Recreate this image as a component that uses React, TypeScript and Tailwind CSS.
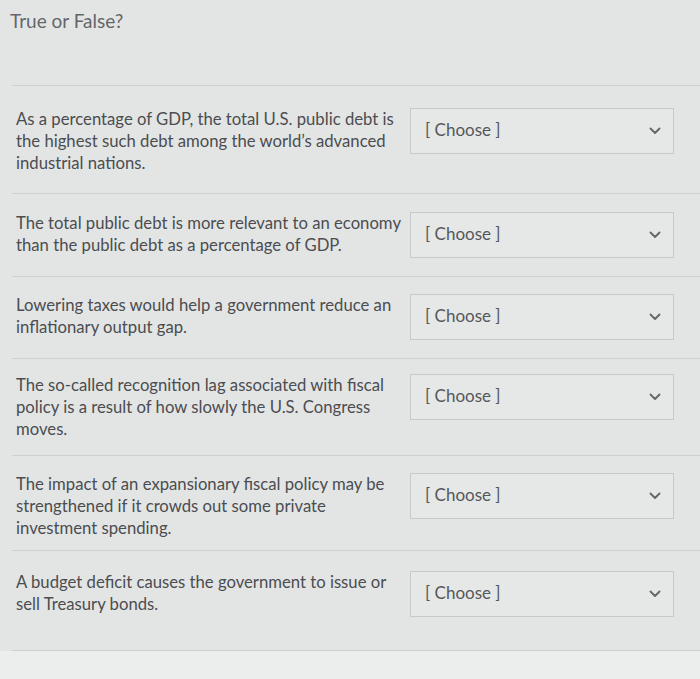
const questions = [
  {
    lines: [
      "As a percentage of GDP, the total U.S. public debt is",
      "the highest such debt among the world’s advanced",
      "industrial nations.",
    ],
    row: "pt-[22px] pb-[19px]",
  },
  {
    lines: [
      "The total public debt is more relevant to an economy",
      "than the public debt as a percentage of GDP.",
    ],
    row: "pt-[18px] pb-[18px]",
  },
  {
    lines: [
      "Lowering taxes would help a government reduce an",
      "inflationary output gap.",
    ],
    row: "pt-[17px] pb-[18px]",
  },
  {
    lines: [
      "The so-called recognition lag associated with fiscal",
      "policy is a result of how slowly the U.S. Congress",
      "moves.",
    ],
    row: "pt-[15px] pb-[15px]",
  },
  {
    lines: [
      "The impact of an expansionary fiscal policy may be",
      "strengthened if it crowds out some private",
      "investment spending.",
    ],
    row: "pt-[17px] pb-[11px]",
  },
  {
    lines: [
      "A budget deficit causes the government to issue or",
      "sell Treasury bonds.",
    ],
    row: "pt-[20px] pb-[33px]",
  },
];

function Chevron() {
  return (
    <svg width="12" height="8" viewBox="0 0 12 8" fill="none">
      <path
        d="M1.5 1.5 L6 6 L10.5 1.5"
        stroke="#65676a"
        strokeWidth="1.9"
        strokeLinecap="round"
        strokeLinejoin="round"
      />
    </svg>
  );
}

export default function App() {
  return (
    <div
      className="w-[700px] h-[679px] bg-[#e3e5e5] text-[#4b4d50] overflow-hidden"
      style={{ fontFamily: "Lato, 'Open Sans', sans-serif" }}
    >
      {/* Header */}
      <div className="h-[85px] pl-[10px] pt-[7px]">
        <h2 className="text-[19px] leading-[28px] text-[#646669]">True or False?</h2>
      </div>

      {/* Questions */}
      <div className="ml-[12px] border-t border-[#cdd0d1]">
        {questions.map((q, i) => (
          <div
            key={i}
            className={`flex items-start border-b border-[#cdd0d1] ${q.row}`}
          >
            <p className="w-[398px] pl-[4px] text-[16.7px] leading-[22px] shrink-0">
              {q.lines.map((l, j) => (
                <span key={j} className="block whitespace-nowrap">
                  {l}
                </span>
              ))}
            </p>
            <div className="w-[264px] h-[46px] border border-[#c7cacb] bg-[#e6e8e8] flex items-center justify-between pl-[14px] pr-[12px]">
              <span className="text-[17px] text-[#55575a] -mt-[2px]">[ Choose ]</span>
              <Chevron />
            </div>
          </div>
        ))}
      </div>

      <div className="h-[30px] bg-[#eceeee]" />
    </div>
  );
}
